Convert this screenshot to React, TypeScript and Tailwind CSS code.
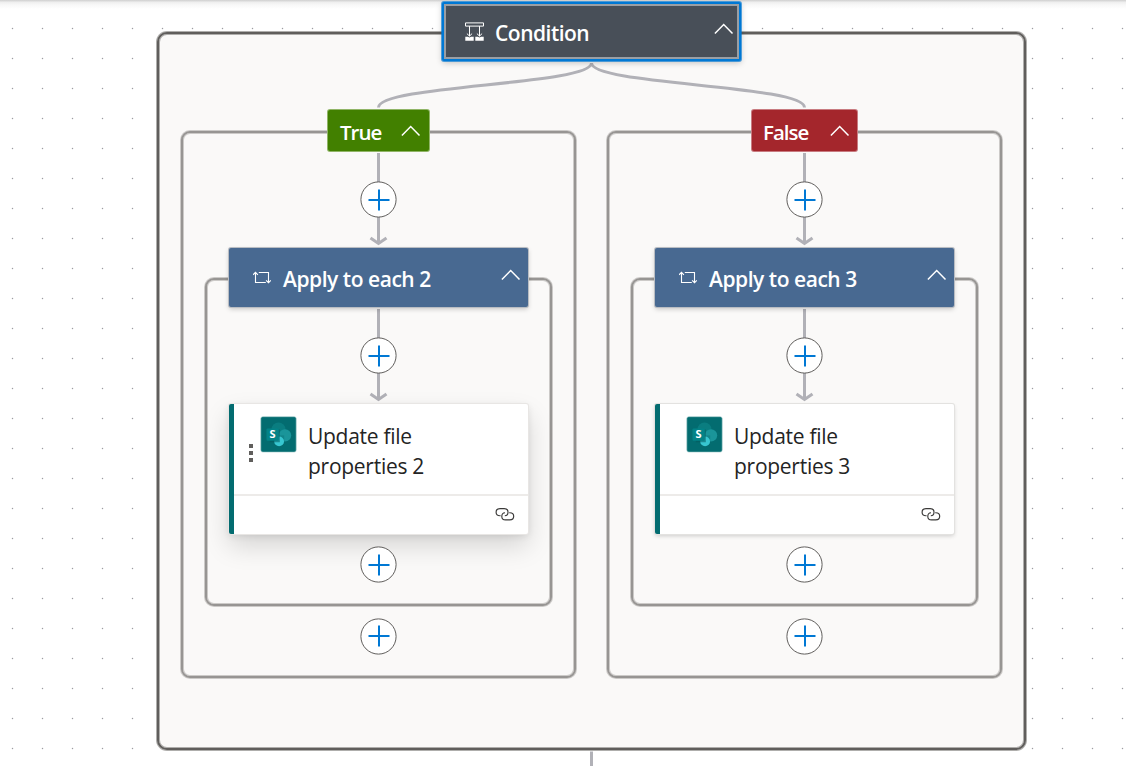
import React from "react";

const frame =
  "absolute rounded-[9px] border-2 border-[#979593] bg-[#faf9f8] shadow-[0_0_0_1px_#cccac8,inset_0_0_0_1px_#cccac8]";
const segoe = "font-['Open_Sans','Noto_Sans',sans-serif]";

function Chevron({ className = "" }: { className?: string }) {
  return (
    <svg className={`block h-[12px] w-[20px] shrink-0 ${className}`} viewBox="0 0 20 12" fill="none" stroke="#fff" strokeWidth="1.5">
      <path d="M.9 10.500 9.700 1.500l8.800 9" />
    </svg>
  );
}

function ConditionIcon() {
  return (
    <svg className="block h-[20px] w-[19px] shrink-0" viewBox="0 0 19 20" fill="none" stroke="#fff" strokeWidth="1">
      <path d="M.5 .9h18v3.200H.5z" />
      <path d="M4.500 4.100v9.900M14.500 4.100v9.900M1.900 11.600l2.600 2.500 2.600-2.500M11.900 11.600l2.600 2.500 2.600-2.500" />
      <path d="M.3 14.700h2.600l1.600 .8 1.600-.8h2.600v4H.3zM10.300 14.700h2.600l1.600 .8 1.600-.8h2.600v4h-8.400z" fill="#fff" stroke="none" />
    </svg>
  );
}

function LoopIcon() {
  return (
    <svg className="block h-[14px] w-[18px] shrink-0" viewBox="0 0 18 14" fill="none" stroke="#fff" strokeWidth="1.1">
      <path d="M.1 3.800 2.500 1.300 4.900 3.800M2.500 1.500V11.500h10.300M5.800 1.500h9.700v10M13.100 9.300l2.400 2.400 2.400-2.400" />
    </svg>
  );
}

function LinkIcon() {
  return (
    <svg className="block h-[13px] w-[19px] overflow-visible" viewBox="0 0 19 13" fill="none" stroke="#3b3a39" strokeWidth="1.15">
      <g transform="translate(.4 -.2)">
        <path d="M5.200 8H4.600C2.300 8 .7 6.500.7 4.500S2.400.9 4.600.9h4.200c2.200 0 3.800 1.600 3.800 3.500S11.200 7.900 9.400 8" />
        <path d="M13.800 5h.6c2.300 0 3.900 1.500 3.900 3.500s-1.700 3.600-3.900 3.600h-4.200c-2.200 0-3.800-1.600-3.800-3.500S7.800 5.100 9.600 5" />
      </g>
    </svg>
  );
}

function SharePointIcon() {
  return (
    <svg className="block h-[36px] w-[36px] shrink-0 overflow-visible" viewBox="0 0 36 36">
      <g transform="translate(.5 .4)">
        <rect x=".3" y=".3" width="35.400" height="35.400" rx="2" fill="#036c70" stroke="#a8cccc" strokeWidth=".6" />
        <circle cx="18" cy="13" r="7" fill="#0a7d80" />
        <circle cx="24.500" cy="19" r="6.200" fill="#1a959a" />
        <path d="M18.500 19h5.200v6.500h-5.200z" fill="#12858a" />
        <circle cx="18.600" cy="25" r="4.900" fill="#37c6d0" />
        <path d="M7.500 13h11.800v12.800H9.500z" fill="#03595d" opacity=".55" />
        <rect x="6" y="12" width="12.300" height="12.300" rx="1" fill="#038387" />
        <text x="12.100" y="22.100" textAnchor="middle" fill="#fff" fontSize="11" fontWeight="700" fontFamily="Open Sans">S</text>
      </g>
    </svg>
  );
}

function AddButton({ className, dy = 0.5 }: { className: string; dy?: number }) {
  return (
    <button className={`absolute left-[179px] z-10 h-[37px] w-[37px] ${className}`} aria-label="Add">
      <svg className="block h-full w-full" viewBox="0 0 37 37">
        <circle cx="18.500" cy="18.500" r="17.600" fill="#fff" stroke="#605e5c" strokeWidth="1" />
        <path transform={`translate(19 ${18.5 + dy})`} d="M-10.500 0h21M0-10.500v21" stroke="#0078d4" strokeWidth="2" />
      </svg>
    </button>
  );
}

function Branch({ index, label, position, labelClass, hovered = false }: {
  index: number; label: string; position: string; labelClass: string; hovered?: boolean;
}) {
  return (
    <section className={`absolute top-0 h-[766px] w-[395px] ${position}`}>
      <div className={`${frame} left-0 top-[131px] h-[547px] w-[395px]`} />
      <div className={`${frame} left-[24px] top-[278px] h-[328px] w-[347px]`} />
      <svg className="absolute left-0 top-0 h-[766px] w-[395px]" viewBox="0 0 395 766" fill="none" stroke="#b1b1b7" strokeWidth="3">
        <path d="M197.500 153v90M189.500 238l8 5.500 8-5.500M197.500 309v90M189.500 394l8 5.500 8-5.500" />
      </svg>

      <div className={`absolute top-[110px] flex h-[41px] items-start justify-between rounded-[2px] text-white ${labelClass}`}>
        <span className="mt-[8px] text-[20.5px] leading-[28px] font-semibold tracking-[-1px]">{label}</span>
        <Chevron className="mt-[15px]" />
      </div>
      <AddButton className="top-[181px]" dy={0.5} />

      <div className="absolute left-[48px] top-[248px] flex h-[59px] w-[299px] rounded-[2px] bg-[#486991] pl-[24px] text-white shadow-[0_0_0_1px_#b9bdc3,0_2px_5px_rgba(0,0,0,0.22)]">
        <div className="mt-[23px]"><LoopIcon /></div>
        <span className="ml-[12px] mt-[17px] grow text-[21px] leading-[28px] font-semibold tracking-[-0.46px] whitespace-nowrap">Apply to each {index}</span>
        <Chevron className="mt-[21px] mr-[7px]" />
      </div>
      <AddButton className="top-[337px]" dy={0.5} />

      <div className={`absolute left-[48px] top-[404px] flex h-[130px] w-[299px] flex-col rounded-[2px] border-l-[5px] border-[#036c70] bg-white ${hovered ? "shadow-[0_0_0_1px_#e8e6e4,0_12px_26px_rgba(0,0,0,0.15),0_2px_7px_rgba(0,0,0,0.10)]" : "shadow-[0_0_0_1px_#e3e2e0,0_2px_4px_rgba(0,0,0,0.18)]"}`}>
        <div className="flex h-[92px] border-b-2 border-[#edebe9] pt-[12px] pl-[14px]">
          <div className="mt-[28px] flex w-[12px] flex-col gap-[3px]">
            {hovered && [0, 1, 2].map((n) => <i key={n} className="ml-[1px] h-[4px] w-[4px] bg-[#605e5c]" />)}
          </div>
          <SharePointIcon />
          <span className="ml-[12px] mt-[5px] w-[140px] text-[21px] leading-[30px] tracking-[-0.27px] text-[#242424]">Update file properties {index}</span>
        </div>
        <div className="flex grow items-center justify-end pr-[14px] pb-[2px]"><LinkIcon /></div>
      </div>
      <AddButton className="top-[546px]" dy={0.5} />
      <AddButton className="top-[618px]" dy={-0.5} />
    </section>
  );
}

export default function App() {
  return (
    <main className={`relative h-[766px] w-[1126px] overflow-hidden bg-white bg-[radial-gradient(circle_at_12.5px_28.5px,#9d9da2_0.45px,transparent_1.1px)] bg-[length:30px_30px] ${segoe}`}>
      <div className="absolute inset-x-0 top-0 h-[24px] bg-[linear-gradient(#d2d2d2_0,#d9d9d9_1px,#eeeeee_2px,#f8f8f8_5px,#fff_9px)]" />
      <div className="absolute left-[157px] top-[32px] h-[718px] w-[869px] rounded-[10px] border-2 border-[#605e5c] bg-[#faf9f8] shadow-[0_0_0_1px_#afaeac,inset_0_0_0_1px_#afaeac]" />

      <Branch index={2} label="True" position="left-[181px]" labelClass="left-[147px] w-[101px] pl-[12px] pr-[8px] bg-[#428000] shadow-[0_0_0_1px_#90b567]" hovered />
      <Branch index={3} label="False" position="left-[607px]" labelClass="left-[145px] w-[105px] pl-[11px] pr-[7px] bg-[#a4262c] shadow-[0_0_0_1px_#c87b80]" />

      <svg className="absolute left-0 top-0 h-[766px] w-[1126px]" viewBox="0 0 1126 766" fill="none" stroke="#b1b1b7" strokeWidth="3">
        <path d="M591.500 63C591.500 85 378.500 85 378.500 107.500M591.500 63C591.500 85 804.500 85 804.500 107.500M591.500 751.500V766" />
      </svg>

      <header className="absolute left-[442px] top-[2px] flex h-[59px] w-[299px] rounded-[2px] border-2 border-[#0078d4] bg-[#484f58] pl-[21px] text-white shadow-[inset_0_0_0_2px_#9a9fa5,0_0_0_1px_rgba(0,120,212,0.65),0_2px_6px_rgba(0,0,0,0.22)]">
        <div className="mt-[18px]"><ConditionIcon /></div>
        <span className="ml-[11px] mt-[15px] grow text-[21px] leading-[28px] font-semibold tracking-[-0.5px]">Condition</span>
        <Chevron className="mt-[19px] mr-[5px]" />
      </header>
    </main>
  );
}
